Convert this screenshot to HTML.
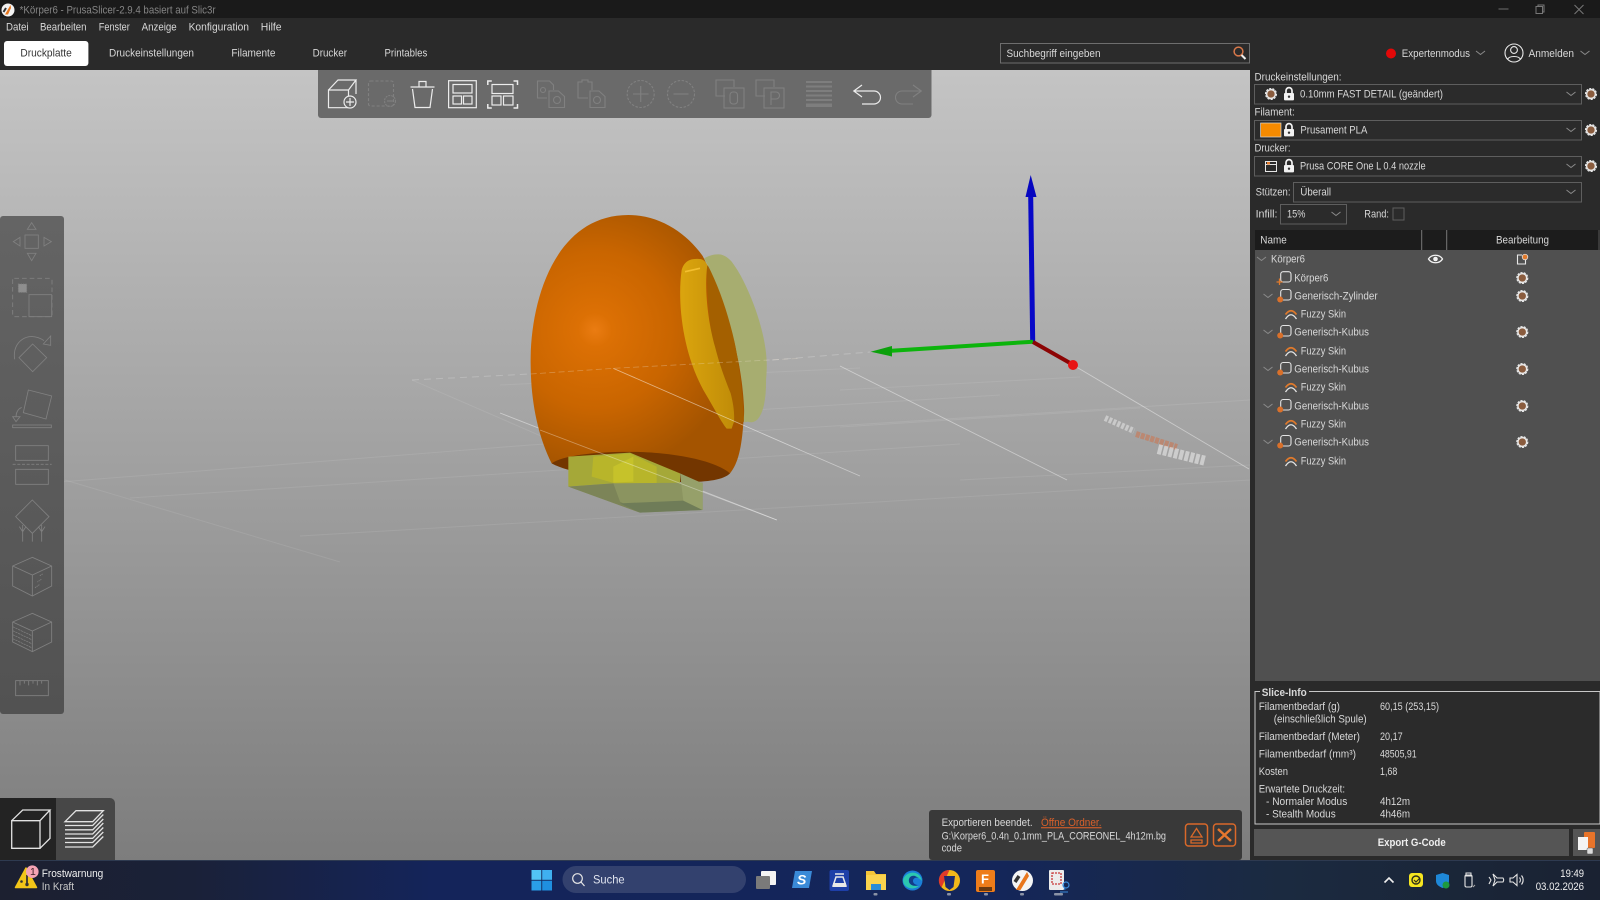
<!DOCTYPE html>
<html><head><meta charset="utf-8"><title>PrusaSlicer</title>
<style>
html,body{margin:0;padding:0;background:#2a2a2a;width:1600px;height:900px;overflow:hidden}
svg{display:block}
text{font-family:"Liberation Sans",sans-serif;font-size:11px;fill:#d8d8d8;transform:translateY(-.5px)}
.b{font-weight:bold}
.d{fill:#858585}
.lt{fill:none;stroke:#808080;stroke-width:2.6}
.tw{fill:none;stroke:#ececec;stroke-width:1.2}
.td{fill:none;stroke:#808080;stroke-width:1.1}
</style></head><body>
<svg width="1600" height="900" viewBox="0 0 1600 900" xmlns="http://www.w3.org/2000/svg">
<defs>
<linearGradient id="bg" x1="0" y1="70" x2="0" y2="860" gradientUnits="userSpaceOnUse"><stop offset="0" stop-color="#c4c4c4"/><stop offset="1" stop-color="#7d7d7d"/></linearGradient>
<linearGradient id="tb" x1="0" y1="0" x2="1600" y2="0" gradientUnits="userSpaceOnUse"><stop offset="0" stop-color="#1c2030"/><stop offset=".12" stop-color="#1a2138"/><stop offset=".27" stop-color="#14245a"/><stop offset=".62" stop-color="#14265a"/><stop offset=".8" stop-color="#1b2a40"/><stop offset="1" stop-color="#1a2232"/></linearGradient>
<radialGradient id="egg" gradientUnits="userSpaceOnUse" cx="285" cy="420" r="430"><stop offset="0" stop-color="#ea7c12"/><stop offset=".12" stop-color="#dc7004"/><stop offset=".55" stop-color="#c96500"/><stop offset="1" stop-color="#a45400"/></radialGradient>
<linearGradient id="band" x1="0" y1="0" x2="1" y2="0"><stop offset="0" stop-color="#dba50e"/><stop offset="1" stop-color="#c08c08"/></linearGradient>
<linearGradient id="side" x1="0" y1="216" x2="0" y2="714" gradientUnits="userSpaceOnUse"><stop offset="0" stop-color="#646464"/><stop offset="1" stop-color="#525252"/></linearGradient>
<g id="cog"><circle r="4.400" fill="#8a5c3e" stroke="#e8e8e8" stroke-width="1.500"/><circle r="5.500" fill="none" stroke="#e8e8e8" stroke-width="1.100" stroke-dasharray="2.200 1.200"/></g>
<g id="lock"><path d="M-3,-1V-3.400a3,3 0 0 1 6,0V-1" fill="none" stroke="#f2f2f2" stroke-width="1.700"/><rect x="-5" y="-1" width="10" height="7.400" rx="1" fill="#f2f2f2"/><circle cy="2.700" r="1.200" fill="#333"/></g>
<g id="v"><path d="M-4.500,-2L0,1.500L4.500,-2" fill="none" stroke="#8a8a8a" stroke-width="1"/></g>
<g id="fz"><path d="M-5.500,5Q0,-3.500 5.500,5" fill="none" stroke="#e4e4e4" stroke-width="1.300"/><path d="M-5.500,0.500Q0,-7 5.500,0.500" fill="none" stroke="#e07a2c" stroke-width="1.700"/></g>
<g id="part"><rect x=".7" y="-6.500" width="10.300" height="10.500" rx="2.500" fill="none" stroke="#e4e4e4" stroke-width="1.100"/><circle cx=".2" cy="3.500" r="3" fill="#d9702a"/></g>
</defs>

<!-- chrome -->
<rect width="1600" height="900" fill="#2a2a2a"/>
<rect width="1600" height="18" fill="#1a1a1a"/>
<circle cx="8" cy="10" r="6.500" fill="#f2f2f2"/><path d="M10.500,5L5,14.500L8,14.500L11,8z" fill="#e8761c"/><path d="M6,8L3.500,12" stroke="#333" stroke-width="2"/>
<text x="19.600" y="14" textLength="196" lengthAdjust="spacingAndGlyphs" class="d">*Körper6 - PrusaSlicer-2.9.4 basiert auf Slic3r</text>
<path d="M1498.500,9h10" stroke="#6e6e6e"/><rect x="1536" y="6.500" width="6.500" height="7" fill="none" stroke="#777"/><path d="M1538,6.500v-1.500h6v7h-1.500" fill="none" stroke="#777"/><path d="M1574.500,5l9,9M1583.500,5l-9,9" stroke="#777"/>
<text x="6" y="31" textLength="22.600" lengthAdjust="spacingAndGlyphs">Datei</text>
<text x="40" y="31" textLength="46.500" lengthAdjust="spacingAndGlyphs">Bearbeiten</text>
<text x="98.800" y="31" textLength="31" lengthAdjust="spacingAndGlyphs">Fenster</text>
<text x="141.600" y="31" textLength="35.100" lengthAdjust="spacingAndGlyphs">Anzeige</text>
<text x="188.600" y="31" textLength="60.400" lengthAdjust="spacingAndGlyphs">Konfiguration</text>
<text x="260.800" y="31" textLength="20.800" lengthAdjust="spacingAndGlyphs">Hilfe</text>
<rect x="4" y="41" width="84.400" height="25" rx="3" fill="#fff"/>
<text x="20.400" y="57" textLength="51.400" lengthAdjust="spacingAndGlyphs" style="fill:#333">Druckplatte</text>
<text x="109" y="57" textLength="85" lengthAdjust="spacingAndGlyphs">Druckeinstellungen</text>
<text x="231.400" y="57" textLength="44" lengthAdjust="spacingAndGlyphs">Filamente</text>
<text x="312.600" y="57" textLength="34.400" lengthAdjust="spacingAndGlyphs">Drucker</text>
<text x="384.500" y="57" textLength="42.800" lengthAdjust="spacingAndGlyphs">Printables</text>

<!-- search -->
<rect x="1000.500" y="43.500" width="249" height="19.500" fill="#2b2b2b" stroke="#6e6e6e"/>
<text x="1006.500" y="57.500" textLength="94" lengthAdjust="spacingAndGlyphs">Suchbegriff eingeben</text>
<circle cx="1238.500" cy="51.500" r="4.400" fill="none" stroke="#d9784a" stroke-width="1.500"/><path d="M1241.500,55l4,4" stroke="#eee" stroke-width="2"/>
<circle cx="1391" cy="53.500" r="5" fill="#e30808"/>
<text x="1401.800" y="57.500" textLength="68.200" lengthAdjust="spacingAndGlyphs">Expertenmodus</text>
<use href="#v" x="1480.500" y="53"/>
<circle cx="1514" cy="53" r="9" fill="none" stroke="#e8e8e8" stroke-width="1.100"/><circle cx="1514" cy="50" r="3.400" fill="none" stroke="#e8e8e8" stroke-width="1.100"/><path d="M1507.500,59.500c1.500,-4 11.500,-4 13,0" fill="none" stroke="#e8e8e8" stroke-width="1.100"/>
<text x="1528.500" y="57.500" textLength="45.500" lengthAdjust="spacingAndGlyphs">Anmelden</text>
<use href="#v" x="1585" y="53"/>

<!-- canvas -->
<rect x="0" y="70" width="1250" height="790" fill="url(#bg)"/>

<!-- bed grid -->
<g stroke="#fff" fill="none">
<g stroke-opacity=".09" stroke-width="1">
<path d="M60,482L530,445L1250,400"/><path d="M840,390L1080,377"/><path d="M840,427L1140,408"/><path d="M960,480L1250,465"/><path d="M130,498L960,444"/><path d="M300,536L1250,480"/><path d="M720,412L1000,395"/><path d="M500,385L860,368"/>
<path d="M65,480L340,562"/><path d="M412,380L700,505"/>
</g>
<g stroke-opacity=".42" stroke-width=".9">
<path d="M1073,365L1249,469"/><path d="M840,366L1067,480"/><path d="M500,413L600,452M700,490L777,520"/><path d="M800,450L860,476"/>
</g>
<path d="M412,380L530,374" stroke-opacity=".2" stroke-dasharray="7 5"/><path d="M760,361L870,352" stroke-opacity=".22" stroke-dasharray="7 5"/>
</g>
<!-- bed logo -->
<g fill="none">
<path d="M1105,418L1134,431" stroke="#eee" stroke-width="6" stroke-opacity=".5" stroke-dasharray="3 1.500"/>
<path d="M1136,434L1177,447" stroke="#c87a58" stroke-width="6" stroke-opacity=".65" stroke-dasharray="4 1"/>
<path d="M1158,449L1206,461" stroke="#f0f0f0" stroke-opacity=".55" stroke-width="10" stroke-dasharray="4 1.500"/>
</g>

<!-- object -->
<g transform="translate(500,190) scale(.33333)">
 <ellipse cx="705" cy="445" rx="78" ry="257" transform="rotate(-12 705 445)" fill="#a7ad70"/>
 <path d="M155,820C110,730 90,620 92,500C95,320 170,75 385,75C480,75 560,130 608,198C660,300 725,500 735,640L730,700C725,770 715,820 690,850C600,885 300,880 155,820Z" fill="url(#egg)"/>
 <path d="M155,820C190,795 300,783 420,786C540,790 650,815 690,850C660,880 560,880 430,870C320,862 210,850 155,820Z" fill="#733600"/>
 <path d="M622,225C680,300 720,480 732,695L700,700C655,590 618,400 622,225Z" fill="#a46000"/>
 <path d="M575,208C600,205 612,205 622,225C612,300 625,400 645,470C660,530 680,580 692,610C700,640 704,670 702,695L695,716L680,716C660,690 640,650 610,600C545,480 532,330 545,240C550,222 560,212 575,208Z" fill="url(#band)"/>
 <path d="M555,245L600,235" stroke="#f3bf30" stroke-width="5"/>
 <path d="M612,205C640,190 670,185 695,215C750,290 805,440 800,540C797,640 765,695 733,697C735,560 690,340 612,205Z" fill="#a7ad70"/>
 <path d="M205,800L390,788L540,850L540,880L340,880L205,890Z" fill="#a5a838"/>
 <path d="M280,800L390,790L470,830L470,880L345,880L275,860Z" fill="#b8b52a"/>
 <path d="M340,830L400,800L400,875L340,878Z" fill="#c6c22a"/>
 <path d="M205,890L340,880L608,878L608,960L420,968Z" fill="#8b9460"/>
 <path d="M205,890L340,880L360,935L420,968Z" fill="#7c8458"/>
 <path d="M360,940L550,932L608,960L420,968Z" fill="#6f7c58"/>
 <path d="M540,850L608,880L608,960L550,932Z" fill="#96a06a"/>
 <path d="M120,720L830,990" stroke="#fff" stroke-opacity=".35" stroke-width="2.500" fill="none"/>
 <path d="M340,535L900,780" stroke="#fff" stroke-opacity=".5" stroke-width="2.500" fill="none"/>
 <path d="M92,552L340,535L900,505" stroke="#f0e0d0" stroke-opacity=".3" stroke-width="2.500" stroke-dasharray="18 10" fill="none"/>
</g>

<!-- axes -->
<path d="M1030.700,197L1032.700,342" stroke="#0808c8" stroke-width="5"/>
<path d="M1030.700,175L1025.500,197L1036.500,197Z" fill="#0606c0"/>
<path d="M1033,341.700L891.700,350.700" stroke="#0cb40c" stroke-width="4"/>
<path d="M870.700,351.700L892,346L892,356.500Z" fill="#0ca00c"/>
<path d="M1033,342L1070,363" stroke="#8c0404" stroke-width="4"/>
<circle cx="1073" cy="365" r="5" fill="#e81414"/>

<!-- top toolbar -->
<rect x="318" y="64" width="613.500" height="54" rx="3" fill="#6a6a6a"/>
<rect x="318" y="64" width="613.500" height="6" fill="#2a2a2a"/>
<g class="tw">
<path d="M328.500,90h20v17.700h-20zM328.500,90l9.500,-10h18l-7.500,10M356,80v14"/>
<circle cx="350" cy="102" r="6" fill="#6a6a6a"/><path d="M350,98v8M346,102h8"/>
<path d="M410.500,87h24M419,86.500v-5h7v5M412.500,89l2.500,18.500h15l2.500,-18.500"/>
<rect x="448.600" y="80.700" width="27.700" height="27"/><rect x="453" y="84.500" width="19" height="8.500"/><rect x="453" y="96" width="8.500" height="8"/><rect x="463.500" y="96" width="8.500" height="8"/>
<rect x="492" y="84.500" width="21" height="9"/><rect x="492" y="96" width="9" height="9"/><rect x="503.500" y="96" width="9.500" height="9"/>
<path d="M487.800,85v-4h4M513.500,81h4v4M487.800,104v4h4M513.500,108h4v-4" stroke-width="1.500"/>
<path d="M862,85L853.800,91L862,97M854.500,91H874a6.500,6.500 0 0 1 0,13H862"/>
</g>
<g class="td">
<rect x="368.500" y="81" width="25" height="25" rx="2" stroke-dasharray="3 2"/><circle cx="390" cy="101" r="5.500" stroke-dasharray="2 1"/><path d="M387,101h6"/>
<path d="M547,98h-9.500v-17h12l4,4v5"/><path d="M549,91h9.500l6,5.500v11h-15.500z"/><circle cx="557" cy="100" r="3.500"/><circle cx="543" cy="90" r="2.500"/>
<path d="M588,98h-10v-16h4v-2h6v2h4v8"/><path d="M590,91h9l6,5.500v11h-15z"/><circle cx="597" cy="100" r="3.500"/>
<circle cx="640.700" cy="94" r="13.500" stroke-dasharray="2.500 1.500"/><path d="M640.700,86v16M633,94h15.500"/>
<circle cx="681" cy="94" r="13.500" stroke-dasharray="2.500 1.500"/><path d="M673.500,94h15"/>
<path d="M725,96h-9v-16h18v7"/><rect x="724" y="88" width="20" height="20"/><rect x="730" y="92" width="7.500" height="12" rx="3"/>
<path d="M765,96h-9v-16h18v7"/><rect x="764" y="88" width="20" height="20"/><path d="M771,105v-13h5a3.200,3.200 0 0 1 0,7h-5"/>
<path d="M913,85L921.300,91L913,97M921,91H902a6.500,6.500 0 0 0 0,13H913"/>
</g>
<g fill="#7e7e7e">
<rect x="806" y="81" width="26" height="2"/><rect x="806" y="85.500" width="26" height="2"/><rect x="806" y="90" width="26" height="2"/><rect x="806" y="94.500" width="26" height="2"/><rect x="806" y="99" width="26" height="2"/><rect x="806" y="103.500" width="26" height="3.500"/>
</g>

<!-- left toolbar -->
<rect x="0" y="216" width="64" height="498" rx="3" fill="url(#side)"/>
<g transform="translate(0,210) scale(.33333)" class="lt">
<rect x="75" y="75" width="40" height="40"/><path d="M95,38L82,58H108ZM82,130H108L95,152ZM60,82V108L40,95ZM132,82V108L154,95Z"/>
<rect x="38" y="205" width="118" height="115" rx="5" stroke-dasharray="14 9"/><rect x="87" y="254" width="68" height="66"/><rect x="55" y="222" width="25" height="25" fill="#8e8e8e" stroke-dasharray="4 3"/>
<path d="M44,448C35,395 85,360 132,392"/><path d="M130,402L152,378V406Z"/><path d="M98,402L140,443L98,485L57,443Z"/>
<path d="M85,540L155,558L138,627L70,608Z"/><rect x="38" y="645" width="116" height="8"/><path d="M65,592C52,598 48,608 48,622"/><path d="M38,620H60L48,635Z"/>
<rect x="47" y="707" width="98" height="44"/><path d="M38,763H155" stroke-dasharray="9 5"/><rect x="47" y="778" width="98" height="45"/>
<path d="M97,870L147,920L97,970L47,920Z"/><path d="M68,995V945M97,995V970M125,995V945M58,950L68,965L78,950M115,950L125,965L135,950"/>
<path d="M97,1042L155,1068V1128L97,1158L38,1128V1068ZM38,1068L97,1095L155,1068M97,1095V1158"/><path d="M128,1092L118,1098M124,1108L112,1116M118,1124L104,1134" stroke-dasharray="4 2"/>
<path d="M97,1210L155,1236V1296L97,1325L38,1296V1236ZM38,1236L97,1263L155,1236M97,1263V1325"/><path d="M38,1250L97,1278M38,1262L97,1290M38,1274L97,1302M38,1286L97,1314" stroke-width="2.200" stroke-dasharray="7 2"/>
<rect x="47" y="1412" width="98" height="45"/><path d="M60,1412v14M73,1412v9M86,1412v14M99,1412v9M112,1412v14M125,1412v9"/>
</g>

<!-- bottom left view toolbar -->
<path d="M56,798H110a5,5 0 0 1 5,5V860H56Z" fill="#474747"/>
<path d="M0,798H56V860H0Z" fill="#232323"/>
<g fill="none" stroke="#e2e2e2" stroke-width="1.300">
<path d="M11.700,820.700H40V848.300H11.700ZM11.700,820.700L22.700,810H50L40,820.700M50,810V838.300L40,848.300"/>
<path d="M65,821.700L76,810.700H103.300L92.700,821.700Z"/>
<path d="M65,825.500H92.700L103.300,814.500M65,829.800H92.700L103.300,819M65,834H92.700L103.300,823M65,838.300H92.700L103.300,827.500M65,842.500H92.700L103.300,832M65,847H92.700L103.300,836.500"/>
</g>

<!-- right panel -->
<text x="1254.500" y="81" textLength="87" lengthAdjust="spacingAndGlyphs">Druckeinstellungen:</text>
<rect x="1254.500" y="84.500" width="327" height="19.500" fill="#2b2b2b" stroke="#5e5e5e"/>
<use href="#cog" x="1271" y="94"/><use href="#lock" x="1289" y="94"/>
<text x="1300" y="98" textLength="143" lengthAdjust="spacingAndGlyphs">0.10mm FAST DETAIL (geändert)</text>
<use href="#v" x="1571" y="94"/><use href="#cog" x="1591" y="94"/>
<text x="1254.500" y="116" textLength="40.200" lengthAdjust="spacingAndGlyphs">Filament:</text>
<rect x="1254.500" y="120.500" width="327" height="19.500" fill="#2b2b2b" stroke="#5e5e5e"/>
<rect x="1260.600" y="123" width="20.400" height="14" fill="#f58a00" stroke="#d9d9d9" stroke-width=".7"/><use href="#lock" x="1289" y="130"/>
<text x="1300.400" y="134" textLength="67" lengthAdjust="spacingAndGlyphs">Prusament PLA</text>
<use href="#v" x="1571" y="130"/><use href="#cog" x="1591" y="130"/>
<text x="1254.500" y="152" textLength="36" lengthAdjust="spacingAndGlyphs">Drucker:</text>
<rect x="1254.500" y="156.500" width="327" height="19.500" fill="#2b2b2b" stroke="#5e5e5e"/>
<rect x="1265.500" y="161.500" width="11" height="10" fill="none" stroke="#e6e6e6"/><path d="M1265.500,164.500h11" stroke="#e6e6e6"/><rect x="1267" y="162" width="3" height="2.500" fill="#e07a2c"/><use href="#lock" x="1289" y="166"/>
<text x="1300" y="170" textLength="125.600" lengthAdjust="spacingAndGlyphs">Prusa CORE One L 0.4 nozzle</text>
<use href="#v" x="1571" y="166"/><use href="#cog" x="1591" y="166"/>
<text x="1255.600" y="196" textLength="34.900" lengthAdjust="spacingAndGlyphs">Stützen:</text>
<rect x="1293.500" y="182.500" width="288" height="19.500" fill="#2b2b2b" stroke="#5e5e5e"/>
<text x="1300.400" y="196" textLength="30.600" lengthAdjust="spacingAndGlyphs">Überall</text><use href="#v" x="1571" y="192"/>
<text x="1255.600" y="218" textLength="21.900" lengthAdjust="spacingAndGlyphs">Infill:</text>
<rect x="1280.500" y="204.500" width="66" height="19.500" fill="#2b2b2b" stroke="#5e5e5e"/>
<text x="1287" y="218" textLength="18.400" lengthAdjust="spacingAndGlyphs">15%</text><use href="#v" x="1336" y="214"/>
<text x="1364.300" y="218" textLength="24.700" lengthAdjust="spacingAndGlyphs">Rand:</text>
<rect x="1393" y="208" width="11" height="12" fill="#2b2b2b" stroke="#5e5e5e"/>

<!-- object list -->
<rect x="1255" y="250" width="345" height="431" fill="#505050"/>
<rect x="1255" y="230" width="343" height="20" fill="#1c1c1c"/>
<path d="M1421.700,230v20M1446.700,230v20" stroke="#777"/>
<rect x="1598" y="230" width="2" height="20" fill="#3a3a3a"/>
<text x="1260.300" y="244" textLength="26.400" lengthAdjust="spacingAndGlyphs">Name</text>
<text x="1496" y="244" textLength="53" lengthAdjust="spacingAndGlyphs">Bearbeitung</text>
<use href="#v" x="1261.500" y="259"/><text x="1271" y="263" textLength="34" lengthAdjust="spacingAndGlyphs">Körper6</text>
<path d="M1428.500,259c3,-5 11,-5 14,0c-3,5 -11,5 -14,0z" fill="none" stroke="#f2f2f2" stroke-width="1.300"/><circle cx="1435.500" cy="259" r="2.300" fill="#f2f2f2"/>
<path d="M1522,255h-4.500v9h8v-4" fill="none" stroke="#e8e8e8" stroke-width="1.100"/><circle cx="1525" cy="257" r="2.800" fill="#e07a2c" stroke="#eee" stroke-width=".7"/>

<rect x="1280.700" y="271.700" width="10.300" height="10.300" rx="2.500" fill="none" stroke="#e4e4e4" stroke-width="1.100"/><path d="M1279.500,278.500v6.500M1276.500,282h6" stroke="#e07a2c" stroke-width="1.300"/>
<text x="1294.300" y="282" textLength="34" lengthAdjust="spacingAndGlyphs">Körper6</text><use href="#cog" x="1522.300" y="278"/>

<use href="#v" x="1268" y="296"/><use href="#part" x="1280" y="296"/><text x="1294.300" y="300" textLength="83.400" lengthAdjust="spacingAndGlyphs">Generisch-Zylinder</text><use href="#cog" x="1522.300" y="296"/>
<use href="#fz" x="1291" y="314"/><text x="1300.700" y="318" textLength="45.300" lengthAdjust="spacingAndGlyphs">Fuzzy Skin</text>

<use href="#v" x="1268" y="332"/><use href="#part" x="1280" y="332"/><text x="1294.300" y="336" textLength="74.700" lengthAdjust="spacingAndGlyphs">Generisch-Kubus</text><use href="#cog" x="1522.300" y="332"/>
<use href="#fz" x="1291" y="351"/><text x="1300.700" y="355" textLength="45.300" lengthAdjust="spacingAndGlyphs">Fuzzy Skin</text>

<use href="#v" x="1268" y="369"/><use href="#part" x="1280" y="369"/><text x="1294.300" y="373" textLength="74.700" lengthAdjust="spacingAndGlyphs">Generisch-Kubus</text><use href="#cog" x="1522.300" y="369"/>
<use href="#fz" x="1291" y="387"/><text x="1300.700" y="391" textLength="45.300" lengthAdjust="spacingAndGlyphs">Fuzzy Skin</text>

<use href="#v" x="1268" y="406"/><use href="#part" x="1280" y="406"/><text x="1294.300" y="410" textLength="74.700" lengthAdjust="spacingAndGlyphs">Generisch-Kubus</text><use href="#cog" x="1522.300" y="406"/>
<use href="#fz" x="1291" y="424"/><text x="1300.700" y="428" textLength="45.300" lengthAdjust="spacingAndGlyphs">Fuzzy Skin</text>

<use href="#v" x="1268" y="442"/><use href="#part" x="1280" y="442"/><text x="1294.300" y="446" textLength="74.700" lengthAdjust="spacingAndGlyphs">Generisch-Kubus</text><use href="#cog" x="1522.300" y="442"/>
<use href="#fz" x="1291" y="461"/><text x="1300.700" y="465" textLength="45.300" lengthAdjust="spacingAndGlyphs">Fuzzy Skin</text>

<!-- slice info -->
<rect x="1255" y="691.500" width="345" height="132.500" fill="#2b2b2b" stroke="#c8c8c8"/>
<rect x="1260" y="686" width="49" height="12" fill="#2b2b2b"/>
<text x="1261.700" y="696.500" textLength="45" lengthAdjust="spacingAndGlyphs" class="b">Slice-Info</text>
<text x="1258.700" y="710.700" textLength="81.300" lengthAdjust="spacingAndGlyphs">Filamentbedarf (g)</text>
<text x="1273.700" y="723" textLength="93" lengthAdjust="spacingAndGlyphs">(einschließlich Spule)</text>
<text x="1258.700" y="740.700" textLength="101.300" lengthAdjust="spacingAndGlyphs">Filamentbedarf (Meter)</text>
<text x="1258.700" y="758" textLength="97.300" lengthAdjust="spacingAndGlyphs">Filamentbedarf (mm³)</text>
<text x="1258.700" y="775.500" textLength="29.300" lengthAdjust="spacingAndGlyphs">Kosten</text>
<text x="1258.700" y="793" textLength="86.300" lengthAdjust="spacingAndGlyphs">Erwartete Druckzeit:</text>
<text x="1266" y="805.500" textLength="81.300" lengthAdjust="spacingAndGlyphs">- Normaler Modus</text>
<text x="1266" y="818" textLength="69.700" lengthAdjust="spacingAndGlyphs">- Stealth Modus</text>
<text x="1380" y="710.700" textLength="59" lengthAdjust="spacingAndGlyphs">60,15 (253,15)</text>
<text x="1380" y="740.700" textLength="22.700" lengthAdjust="spacingAndGlyphs">20,17</text>
<text x="1380" y="758" textLength="36.700" lengthAdjust="spacingAndGlyphs">48505,91</text>
<text x="1380" y="775.500" textLength="17.300" lengthAdjust="spacingAndGlyphs">1,68</text>
<text x="1380" y="805.500" textLength="30" lengthAdjust="spacingAndGlyphs">4h12m</text>
<text x="1380" y="818" textLength="30" lengthAdjust="spacingAndGlyphs">4h46m</text>
<rect x="1254" y="829" width="315" height="27" fill="#555"/>
<text x="1377.700" y="846.300" textLength="68" lengthAdjust="spacingAndGlyphs" class="b" style="fill:#efefef">Export G-Code</text>
<rect x="1573" y="829" width="27" height="27" fill="#555"/>
<rect x="1584" y="832" width="11" height="16" rx="1" fill="#e8742a"/>
<path d="M1578,837h10v13h-10z" fill="#f4f4f4"/><rect x="1587" y="848" width="6" height="6" rx="1" fill="#dcdcdc" stroke="#555" stroke-width=".5"/>

<!-- notification -->
<rect x="929" y="810" width="313" height="50" rx="3" fill="#393939"/>
<text x="941.600" y="826.700" textLength="91" lengthAdjust="spacingAndGlyphs">Exportieren beendet.</text>
<text x="1041" y="826.700" textLength="60.500" lengthAdjust="spacingAndGlyphs" style="fill:#d9602a;text-decoration:underline">Öffne Ordner.</text>
<text x="941.600" y="840" textLength="224.400" lengthAdjust="spacingAndGlyphs">G:\Korper6_0.4n_0.1mm_PLA_COREONEL_4h12m.bg</text>
<text x="941.600" y="852" textLength="20.400" lengthAdjust="spacingAndGlyphs">code</text>
<rect x="1185.500" y="824" width="22" height="22" rx="3" fill="none" stroke="#d9692a" stroke-width="1.500"/>
<path d="M1196.500,828.500L1191,837H1202ZM1191,840H1202V843H1191Z" fill="none" stroke="#d9692a" stroke-width="1.300"/>
<rect x="1213.500" y="824" width="22" height="22" rx="3" fill="none" stroke="#d9692a" stroke-width="1.500"/>
<path d="M1218,829L1231,841M1231,829L1218,841" stroke="#e8772e" stroke-width="2.400"/>

<!-- taskbar -->
<rect y="860" width="1600" height="40" fill="url(#tb)"/>
<rect y="860" width="1600" height="1" fill="#2e3a50"/>
<path d="M26,868L36.500,887.500H15.500Z" fill="#f2c518" stroke="#f2c518" stroke-width="1.500" stroke-linejoin="round"/>
<path d="M27,875v9" stroke="#333" stroke-width="1.800"/><circle cx="27" cy="884.500" r="1.700" fill="#333"/><circle cx="21.500" cy="881.500" r="1.300" fill="#333"/>
<circle cx="32.300" cy="871.700" r="6.300" fill="#f5a3b4"/>
<text x="30" y="875.500" style="fill:#402028;font-size:10.500px">1</text>
<text x="41.700" y="877.300" textLength="61.600" lengthAdjust="spacingAndGlyphs" style="fill:#f0f0f0">Frostwarnung</text>
<text x="41.700" y="890.700" textLength="32.300" lengthAdjust="spacingAndGlyphs" style="fill:#c8c8c8">In Kraft</text>

<g><rect x="531.500" y="870" width="9.800" height="9.800" fill="#52c4f6"/><rect x="542.200" y="870" width="9.800" height="9.800" fill="#3fb0f0"/><rect x="531.500" y="880.700" width="9.800" height="9.800" fill="#2a9ee8"/><rect x="542.200" y="880.700" width="9.800" height="9.800" fill="#1f8fe0"/></g>
<rect x="562.500" y="866" width="183.500" height="27" rx="13.500" fill="#33416e"/>
<circle cx="577.500" cy="878.500" r="4.800" fill="none" stroke="#e6e6e6" stroke-width="1.200"/><path d="M581,882l3.500,4" stroke="#e6e6e6" stroke-width="1.200"/>
<text x="593" y="884" textLength="31.600" lengthAdjust="spacingAndGlyphs" style="fill:#dfe3ee;font-size:12px">Suche</text>

<rect x="761" y="871" width="15" height="14" rx="1" fill="#f4f4f4"/><rect x="756" y="876" width="14" height="13" rx="1" fill="#7a7a7a"/>
<path d="M795,871H812L809,888H792Z" fill="#3a8ad8"/><text x="797" y="885" class="b" style="fill:#fff;font-size:14px;font-style:italic">S</text>
<rect x="829.500" y="870" width="19.500" height="21" rx="2" fill="#1e3fa8"/><path d="M835,874H844M836,877L833,886H846L843,877Z" fill="none" stroke="#e8e8e8" stroke-width="1.500"/><rect x="833" y="883" width="13" height="4" fill="#e8e8e8"/>
<path d="M866,871H874L876,874H886V890H866Z" fill="#f5c538"/><rect x="866" y="875" width="20" height="15" fill="#fad34e"/><rect x="871" y="884" width="10" height="6" fill="#2a8cd8"/>
<circle cx="912.500" cy="880.500" r="10" fill="#1b7fd8"/><path d="M903,880c2,-9 17,-11 19,1c-3,-4 -9,-5 -11,-1c-1,3 2,7 8,6c-6,5 -16,2 -16,-6z" fill="#2bc7b0"/><path d="M915,876c-3,-1 -7,1 -6,6c1,3 5,5 9,3c-3,0 -5,-2 -5,-4c0,-3 3,-4 6,-3z" fill="#123d8a"/>
<circle cx="949.500" cy="880.500" r="10.500" fill="#f2b81a"/><path d="M949.500,870a10.500,10.500 0 0 0 -8,17.500l8,-17.500z" fill="#e03a2a"/><path d="M944,876h11l-1.500,11l-4,3l-4,-3z" fill="#1a2a6e"/>
<rect x="976" y="870" width="19" height="22" rx="2" fill="#ee7d1a"/><text x="981" y="884" class="b" style="fill:#fff;font-size:13px">F</text><rect x="979" y="887" width="13" height="4" fill="#6a3a10"/>
<circle cx="1022.500" cy="880.500" r="10.500" fill="#f4f4f4"/><path d="M1027,872L1016,890H1020.500L1029,876Z" fill="#e8761c"/><path d="M1019,876L1015,882" stroke="#333" stroke-width="3.500"/>
<rect x="1049" y="870" width="15" height="20" rx="1" fill="#ececec"/><rect x="1052" y="873" width="9" height="11" fill="none" stroke="#c83a3a" stroke-width="1.300" stroke-dasharray="2 1"/><circle cx="1066" cy="885" r="3" fill="none" stroke="#3a8ad8" stroke-width="1.200"/><path d="M1060,892h8M1063,884l2,6" stroke="#3a8ad8"/>
<g fill="#8b93a6"><rect x="873.500" y="893" width="4" height="2.500" rx="1"/><rect x="947" y="893" width="4" height="2.500" rx="1"/><rect x="984" y="893" width="4" height="2.500" rx="1"/><rect x="1020" y="893" width="4" height="2.500" rx="1"/><rect x="1054" y="893" width="9" height="2.500" rx="1"/></g>

<path d="M1384.500,882.500L1389,878L1393.500,882.500" fill="none" stroke="#f0f0f0" stroke-width="1.600"/>
<rect x="1409" y="873" width="14" height="14" rx="3" fill="#f6e620"/><circle cx="1416" cy="880" r="4" fill="none" stroke="#2e2e1a" stroke-width="1.400"/><path d="M1414,880l2,2l4,-4" fill="none" stroke="#2e2e1a" stroke-width="1.200"/>
<path d="M1436,875L1442.700,873L1449,875V881C1449,885 1445,887 1442.700,888C1440,887 1436,885 1436,881Z" fill="#1e88d8"/><circle cx="1446" cy="885" r="3.500" fill="#1e9a3e"/>
<rect x="1465" y="875" width="7" height="12" rx="1.500" fill="none" stroke="#e6e6e6" stroke-width="1.100"/><rect x="1466" y="873" width="5" height="3" fill="none" stroke="#e6e6e6"/><path d="M1473,887l2,-2" stroke="#aaa"/>
<path d="M1489,877L1491,880L1489,884M1493,874L1497,878H1503C1504,879.500 1504,880.500 1503,882H1497L1493,886L1495,880Z" fill="none" stroke="#e6e6e6" stroke-width="1.100"/>
<path d="M1510,878H1513L1517,874.500V885.500L1513,882H1510Z" fill="none" stroke="#e6e6e6" stroke-width="1.100"/><path d="M1519.500,877.500a4,4 0 0 1 0,5M1521.500,875.500a7,7 0 0 1 0,9" fill="none" stroke="#e6e6e6" stroke-width="1.100"/>
<text x="1560.300" y="877.300" textLength="23.700" lengthAdjust="spacingAndGlyphs" style="fill:#f0f0f0">19:49</text>
<text x="1535.700" y="890.700" textLength="48.300" lengthAdjust="spacingAndGlyphs" style="fill:#f0f0f0">03.02.2026</text>
</svg>
</body></html>
